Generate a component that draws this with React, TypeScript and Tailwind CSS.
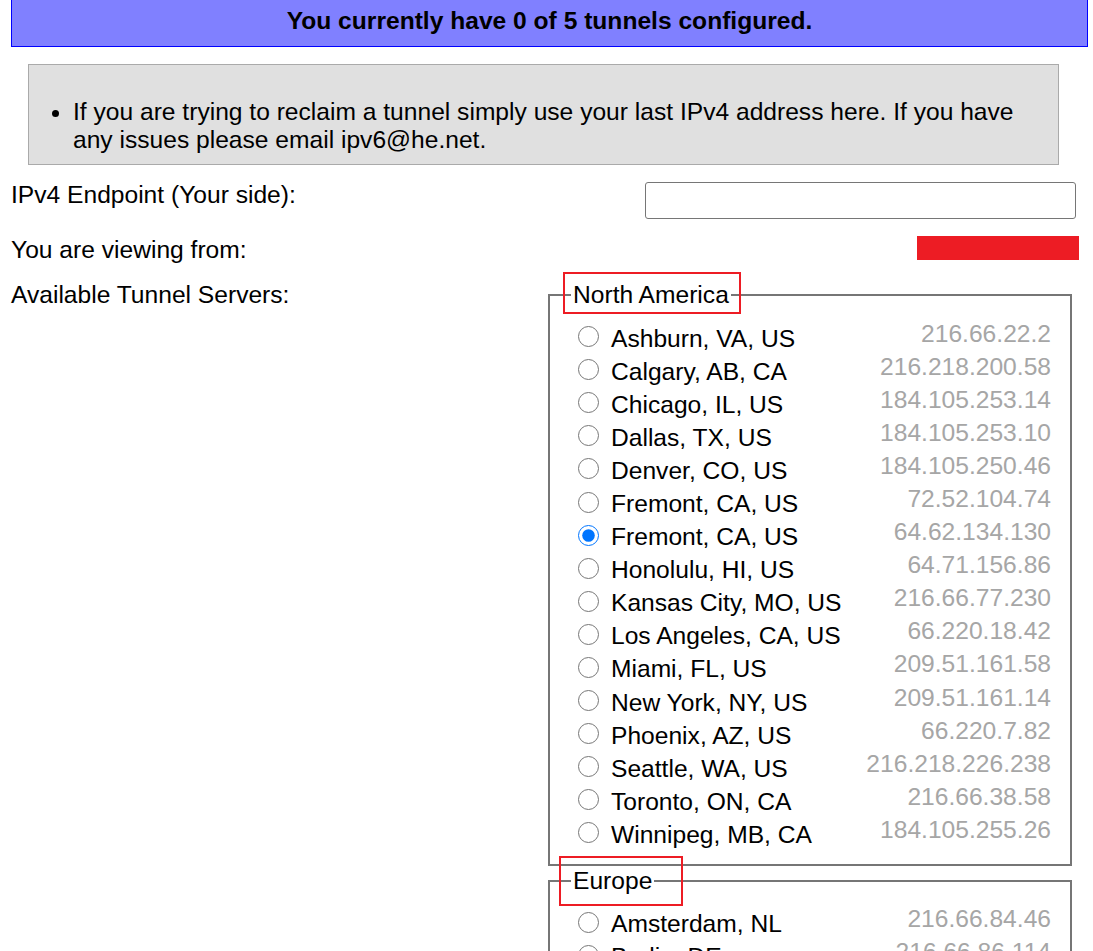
import React from "react";

type Server = { city: string; ip: string; checked?: boolean };

const northAmerica: Server[] = [
  { city: "Ashburn, VA, US", ip: "216.66.22.2" },
  { city: "Calgary, AB, CA", ip: "216.218.200.58" },
  { city: "Chicago, IL, US", ip: "184.105.253.14" },
  { city: "Dallas, TX, US", ip: "184.105.253.10" },
  { city: "Denver, CO, US", ip: "184.105.250.46" },
  { city: "Fremont, CA, US", ip: "72.52.104.74" },
  { city: "Fremont, CA, US", ip: "64.62.134.130", checked: true },
  { city: "Honolulu, HI, US", ip: "64.71.156.86" },
  { city: "Kansas City, MO, US", ip: "216.66.77.230" },
  { city: "Los Angeles, CA, US", ip: "66.220.18.42" },
  { city: "Miami, FL, US", ip: "209.51.161.58" },
  { city: "New York, NY, US", ip: "209.51.161.14" },
  { city: "Phoenix, AZ, US", ip: "66.220.7.82" },
  { city: "Seattle, WA, US", ip: "216.218.226.238" },
  { city: "Toronto, ON, CA", ip: "216.66.38.58" },
  { city: "Winnipeg, MB, CA", ip: "184.105.255.26" },
];

const europe: Server[] = [
  { city: "Amsterdam, NL", ip: "216.66.84.46" },
  { city: "Berlin, DE", ip: "216.66.86.114" },
  { city: "Budapest, HU", ip: "216.66.87.14" },
  { city: "Frankfurt, DE", ip: "216.66.80.30" },
  { city: "Lisbon, PT", ip: "216.66.87.102" },
  { city: "London, UK", ip: "216.66.80.26" },
];

function ServerRow({ server }: { server: Server }) {
  return (
    <div className="flex h-[33.1px] items-center">
      <input
        type="radio"
        name="tserv"
        defaultChecked={server.checked}
        className="ml-[28px] h-[21px] w-[21px] shrink-0 accent-[#0075ff]"
      />
      <span className="ml-[12px] pt-[4px] leading-[28px] whitespace-nowrap">{server.city}</span>
      <span className="ml-auto mr-[19px] pb-[6px] leading-[28px] text-[#a6a6a6]">{server.ip}</span>
    </div>
  );
}

function Region({
  title,
  servers,
  mark,
}: {
  title: string;
  servers: Server[];
  mark: string;
}) {
  return (
    <fieldset className="border-2 border-[#767676] pt-[11px] pb-[14px]">
      <legend className="relative ml-[21px] px-[2px] leading-[28px]">
        {title}
        {/* red annotation box drawn over the legend */}
        <span className={`pointer-events-none absolute border-2 border-[#ed1c24] ${mark}`} />
      </legend>
      {servers.map((s, i) => (
        <ServerRow key={i} server={s} />
      ))}
    </fieldset>
  );
}

export default function App() {
  return (
    <div className="min-h-screen bg-white font-['Liberation_Sans',Arial,sans-serif] text-[24.6px] text-black">
      {/* tunnel count banner */}
      <div className="ml-[11px] flex h-[47px] w-[1077px] items-center justify-center border-x border-b border-[#0000ff] bg-[#8080ff] pb-[4px] font-bold">
        You currently have 0 of 5 tunnels configured.
      </div>

      {/* notice box */}
      <div className="mt-[17px] ml-[28px] h-[101px] w-[1031px] border border-[#aaaaaa] bg-[#e0e0e0] pt-[33px]">
        <ul className="list-disc pr-[40px] pl-[44px] leading-[28px]">
          <li>
            If you are trying to reclaim a tunnel simply use your last IPv4 address here. If you have
            any issues please email ipv6@he.net.
          </li>
        </ul>
      </div>

      <div className="mt-[16px] flex items-start">
        <span className="pl-[11px] leading-[28px]">IPv4 Endpoint (Your side):</span>
        <input
          type="text"
          className="mt-[1px] mr-[17px] ml-auto h-[37px] w-[431px] rounded-[3px] border border-[#767676] bg-white"
        />
      </div>

      <div className="mt-[17px] flex items-start">
        <span className="pl-[11px] leading-[28px]">You are viewing from:</span>
        <div className="mr-[14px] ml-auto h-[24px] w-[162px] bg-[#ed1c24]" />
      </div>

      <div className="mt-[17px] flex items-start">
        <span className="w-[548px] shrink-0 pl-[11px] leading-[28px]">Available Tunnel Servers:</span>
        <div className="flex w-[524px] flex-col gap-[1px]">
          <Region
            title="North America"
            servers={northAmerica}
            mark="-top-[9px] -bottom-[5px] -left-[8px] -right-[10px]"
          />
          <Region
            title="Europe"
            servers={europe}
            mark="-top-[11px] -bottom-[11px] -left-[12px] -right-[29px]"
          />
        </div>
      </div>
    </div>
  );
}
